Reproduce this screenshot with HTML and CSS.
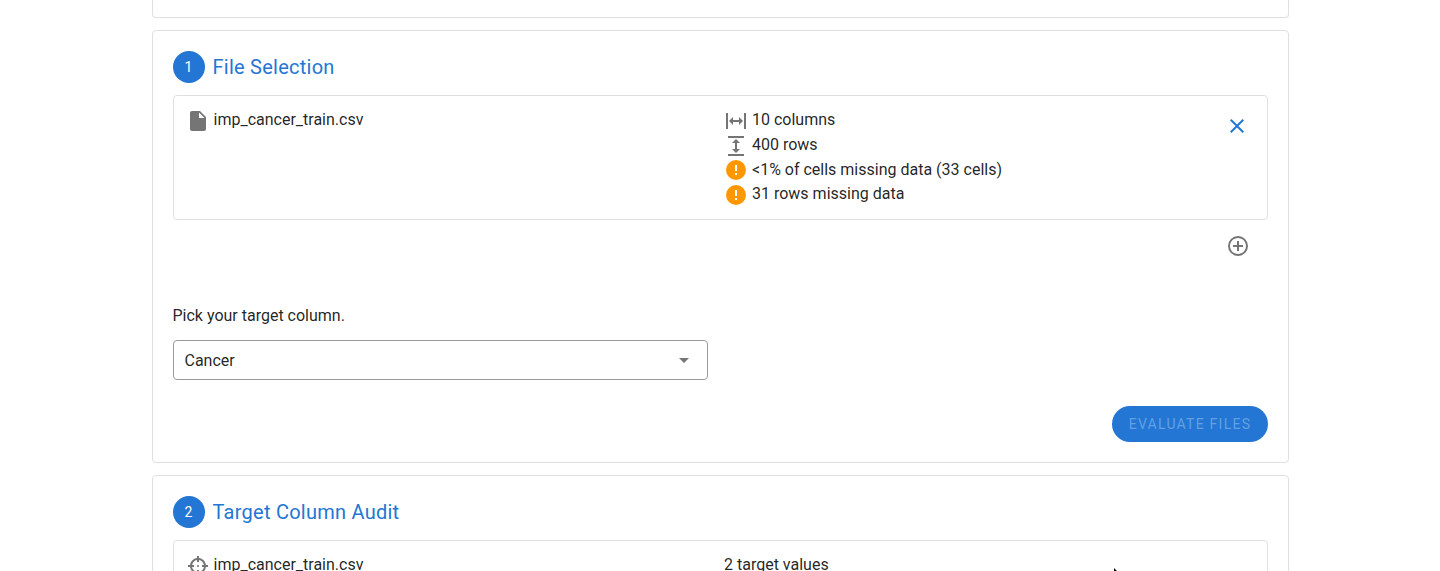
FILE: index.html
```html
<!DOCTYPE html>
<html lang="en">
<head>
<meta charset="utf-8">
<title>File Selection</title>
<link rel="stylesheet" href="styles.css">
</head>
<body>
<main class="page">
  <section class="card card-previous"></section>
  <section class="card card-files">
    <h2 class="step-title"><span class="step-badge">1</span><span class="step-text">File Selection</span></h2>
    <div class="panel">
      <div class="file-name">
        <svg class="icon" viewBox="0 0 24 24"><path d="M13,9V3.5L18.5,9M6,2C4.89,2 4,2.89 4,4V20A2,2 0 0,0 6,22H18A2,2 0 0,0 20,20V8L14,2H6Z"/></svg>
        <span>imp_cancer_train.csv</span>
      </div>
      <ul class="stats">
        <li><svg class="icon" viewBox="0 0 24 24"><path d="M9,11H15V8L19,12L15,16V13H9V16L5,12L9,8V11M2,20V4H4V20H2M20,20V4H22V20H20Z"/></svg><span>10 columns</span></li>
        <li><svg class="icon" viewBox="0 0 24 24"><path d="M13,9V15H16L12,19L8,15H11V9H8L12,5L16,9H13M4,2H20V4H4V2M4,20H20V22H4V20Z"/></svg><span>400 rows</span></li>
        <li><svg class="icon warn" viewBox="0 0 24 24"><path d="M13,13H11V7H13M13,17H11V15H13M12,2A10,10 0 0,0 2,12A10,10 0 0,0 12,22A10,10 0 0,0 22,12A10,10 0 0,0 12,2Z"/></svg><span>&lt;1% of cells missing data (33 cells)</span></li>
        <li><svg class="icon warn" viewBox="0 0 24 24"><path d="M13,13H11V7H13M13,17H11V15H13M12,2A10,10 0 0,0 2,12A10,10 0 0,0 12,22A10,10 0 0,0 22,12A10,10 0 0,0 12,2Z"/></svg><span>31 rows missing data</span></li>
      </ul>
      <svg class="icon remove" viewBox="0 0 24 24"><path d="M19,6.41L17.59,5L12,10.59L6.41,5L5,6.41L10.59,12L5,17.59L6.41,19L12,13.41L17.59,19L19,17.59L13.41,12L19,6.41Z"/></svg>
    </div>
    <div class="add-row">
      <svg class="icon" viewBox="0 0 24 24"><path d="M12,20C7.59,20 4,16.41 4,12C4,7.59 7.59,4 12,4C16.41,4 20,7.59 20,12C20,16.41 16.41,20 12,20M12,2A10,10 0 0,0 2,12A10,10 0 0,0 12,22A10,10 0 0,0 22,12A10,10 0 0,0 12,2M13,7H11V11H7V13H11V17H13V13H17V11H13V7Z"/></svg>
    </div>
    <p class="prompt">Pick your target column.</p>
    <div class="select">
      <span>Cancer</span>
      <svg class="icon" viewBox="0 0 24 24"><path d="M7,10L12,15L17,10H7Z"/></svg>
    </div>
    <div class="actions"><button class="evaluate" disabled>EVALUATE FILES</button></div>
  </section>
  <section class="card card-audit">
    <h2 class="step-title"><span class="step-badge">2</span><span class="step-text">Target Column Audit</span></h2>
    <div class="panel">
      <div class="file-name">
        <svg class="icon" viewBox="0 0 24 24"><path d="M11,2V4.07C7.38,4.53 4.53,7.38 4.07,11H2V13H4.07C4.53,16.62 7.38,19.47 11,19.93V22H13V19.93C16.62,19.47 19.47,16.62 19.93,13H22V11H19.93C19.47,7.38 16.62,4.53 13,4.07V2M11,6.08V8H13V6.09C15.5,6.5 17.5,8.5 17.92,11H16V13H17.91C17.5,15.5 15.5,17.5 13,17.92V16H11V17.91C8.5,17.5 6.5,15.5 6.08,13H8V11H6.09C6.5,8.5 8.5,6.5 11,6.08M12,11A1,1 0 0,0 11,12A1,1 0 0,0 12,13A1,1 0 0,0 13,12A1,1 0 0,0 12,11Z"/></svg>
        <span>imp_cancer_train.csv</span>
      </div>
      <div class="values">2 target values</div>
    </div>
  </section>
</main>
<svg class="pointer" viewBox="0 0 12 18"><path d="M1,1V15L4.3,12L6.5,17L8.7,16L6.6,11.2H11Z"/></svg>
</body>
</html>
```
FILE: styles.css
```css
* { box-sizing: border-box; }
html, body { margin: 0; height: 571px; overflow: hidden; }
body {
  position: relative;
  background: #fff;
  color: rgba(0, 0, 0, .87);
  font: 16px/24px Roboto, sans-serif;
}
.page {
  width: 1137px;
  margin-left: 151.5px;
  display: flex;
  flex-direction: column;
  gap: 12px;
}
.card {
  flex: none;
  border: 1px solid #e0e0e0;
  border-radius: 4px;
  padding: 20px;
}
.card-previous { height: 18px; padding: 0; border-top: 0; border-radius: 0 0 4px 4px; }
.card-files { height: 433px; }
.card-audit { height: 240px; }
.step-title {
  display: flex;
  align-items: center;
  gap: 8px;
  height: 32px;
  margin: 0 0 12px;
  color: #2376d3;
  font-size: 20px;
  font-weight: 400;
  letter-spacing: .25px;
}
.step-badge {
  width: 32px;
  height: 32px;
  border-radius: 50%;
  background: #2376d3;
  color: #fff;
  font-size: 14px;
  line-height: 32px;
  text-align: center;
}
.panel {
  display: grid;
  grid-template-columns: 538.5px 1fr 24px;
  height: 125px;
  padding: 12px 18px 0 12px;
  border: 1px solid #e0e0e0;
  border-radius: 4px;
}
.icon { width: 24px; height: 24px; fill: #757575; flex: none; }
.file-name { display: flex; gap: 4px; height: 24px; }
.file-name .icon { margin-top: 1px; }
.file-name span { line-height: 23px; }
.stats { margin: 0; padding: 0; list-style: none; }
.stats li { display: flex; gap: 4px; height: 24.75px; }
.stats .icon { margin-top: 1px; }
.stats li:nth-child(3) .icon { margin-top: .5px; }
.stats span { line-height: 23px; }
.icon.warn { fill: #ff9800; }
.icon.remove { fill: #2376d3; margin-top: 6px; }
.add-row { display: flex; justify-content: flex-end; height: 84px; padding: 14px 18px 0 0; }
.prompt { margin: 0 0 12px; }
.select {
  display: flex;
  align-items: center;
  justify-content: space-between;
  width: 535px;
  height: 40px;
  padding: 0 11px;
  border: 1px solid #9b9b9b;
  border-radius: 4px;
}
.select span { padding-top: 2px; }
.actions { display: flex; justify-content: flex-end; padding-top: 26px; }
.evaluate {
  width: 156px;
  height: 36px;
  padding: 0 0 0 1px;
  border: 0;
  border-radius: 18px;
  background: #2376d3;
  color: #62a0e3;
  font: 14px/36px Roboto, sans-serif;
  letter-spacing: 1.25px;
}
.pointer { position: absolute; left: 1113px; top: 567px; width: 12px; height: 18px; }
```
